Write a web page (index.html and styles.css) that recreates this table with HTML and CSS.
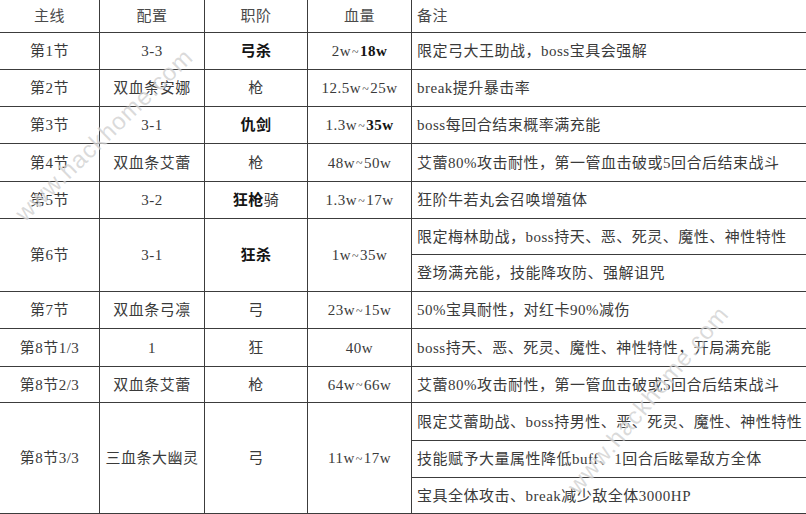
FILE: index.html
```html
<!DOCTYPE html>
<html lang="zh-CN">
<head>
<meta charset="utf-8">
<title>关卡配置</title>
<link rel="stylesheet" href="styles.css">
</head>
<body>
<div class="sheet">
  <div class="grid">
    <div class="c h">主线</div>
    <div class="c h">配置</div>
    <div class="c h">职阶</div>
    <div class="c h">血量</div>
    <div class="c h note">备注</div>

    <div class="c">第1节</div>
    <div class="c">3-3</div>
    <div class="c"><b>弓杀</b></div>
    <div class="c">2w<span class="tl">~</span><b>18w</b></div>
    <div class="c note">限定弓大王助战，boss宝具会强解</div>

    <div class="c">第2节</div>
    <div class="c">双血条安娜</div>
    <div class="c">枪</div>
    <div class="c">12.5w<span class="tl">~</span>25w</div>
    <div class="c note">break提升暴击率</div>

    <div class="c">第3节</div>
    <div class="c">3-1</div>
    <div class="c"><b>仇剑</b></div>
    <div class="c">1.3w<span class="tl">~</span><b>35w</b></div>
    <div class="c note">boss每回合结束概率满充能</div>

    <div class="c">第4节</div>
    <div class="c">双血条艾蕾</div>
    <div class="c">枪</div>
    <div class="c">48w<span class="tl">~</span>50w</div>
    <div class="c note">艾蕾80%攻击耐性，第一管血击破或5回合后结束战斗</div>

    <div class="c">第5节</div>
    <div class="c">3-2</div>
    <div class="c"><b>狂枪</b>骑</div>
    <div class="c">1.3w<span class="tl">~</span>17w</div>
    <div class="c note">狂阶牛若丸会召唤增殖体</div>

    <div class="c span2">第6节</div>
    <div class="c span2">3-1</div>
    <div class="c span2"><b>狂杀</b></div>
    <div class="c span2">1w<span class="tl">~</span>35w</div>
    <div class="c note">限定梅林助战，boss持天、恶、死灵、魔性、神性特性</div>
    <div class="c note">登场满充能，技能降攻防、强解诅咒</div>

    <div class="c">第7节</div>
    <div class="c">双血条弓凛</div>
    <div class="c">弓</div>
    <div class="c">23w<span class="tl">~</span>15w</div>
    <div class="c note">50%宝具耐性，对红卡90%减伤</div>

    <div class="c">第8节1/3</div>
    <div class="c">1</div>
    <div class="c">狂</div>
    <div class="c">40w</div>
    <div class="c note">boss持天、恶、死灵、魔性、神性特性，开局满充能</div>

    <div class="c">第8节2/3</div>
    <div class="c">双血条艾蕾</div>
    <div class="c">枪</div>
    <div class="c">64w<span class="tl">~</span>66w</div>
    <div class="c note">艾蕾80%攻击耐性，第一管血击破或5回合后结束战斗</div>

    <div class="c span3">第8节3/3</div>
    <div class="c span3">三血条大幽灵</div>
    <div class="c span3">弓</div>
    <div class="c span3">11w<span class="tl">~</span>17w</div>
    <div class="c note">限定艾蕾助战、boss持男性、恶、死灵、魔性、神性特性</div>
    <div class="c note">技能赋予大量属性降低buff、1回合后眩晕敌方全体</div>
    <div class="c note">宝具全体攻击、break减少敌全体3000HP</div>
  </div>
  <div class="wm wm1">www.hackhome.com</div>
  <div class="wm wm2">www.hackhome.com</div>
</div>
</body>
</html>
```

FILE: styles.css
```css
html, body {
  margin: 0;
  padding: 0;
  background: #ffffff;
}

body {
  width: 806px;
  height: 514px;
  overflow: hidden;
}

.sheet {
  position: relative;
  width: 806px;
  height: 514px;
  overflow: hidden;
}

.grid {
  display: grid;
  grid-template-columns: 100px 105px 103px 104px 394px;
  grid-template-rows: 33px 37px 37px 37px 38px 37px 36px 37px 37px 38px 36px 38px 37px 36px;
  font-family: "Liberation Serif", "Noto Sans CJK SC", serif;
  font-size: 15px;
  letter-spacing: 0.5px;
  color: #3a3a3a;
}

.c {
  box-sizing: border-box;
  display: flex;
  align-items: center;
  justify-content: center;
  border-right: 1px solid #3c3c3c;
  border-bottom: 1px solid #3c3c3c;
  white-space: nowrap;
  line-height: 1;
  padding-top: 1px;
}

.c b {
  font-weight: 700;
  color: #141414;
}

.h {
  color: #4a4a4a;
}

.note {
  justify-content: flex-start;
  padding-left: 5px;
  border-right: none;
}

.span2 {
  grid-row: span 2;
}

.span3 {
  grid-row: span 3;
}

.tl {
  vertical-align: 0.35em;
  font-size: 12px;
  margin: 0 1px;
}

.wm {
  position: absolute;
  font-family: "Liberation Sans", sans-serif;
  font-size: 24px;
  letter-spacing: 1px;
  color: rgba(150, 150, 150, 0.35);
  text-shadow: 0 0 1px rgba(255, 255, 255, 0.8);
  white-space: nowrap;
  pointer-events: none;
  transform-origin: center center;
}

.wm1 {
  left: -14px;
  top: 121px;
  transform: rotate(-44deg);
}

.wm2 {
  left: 530px;
  top: 386px;
  transform: rotate(-50deg);
}
```
